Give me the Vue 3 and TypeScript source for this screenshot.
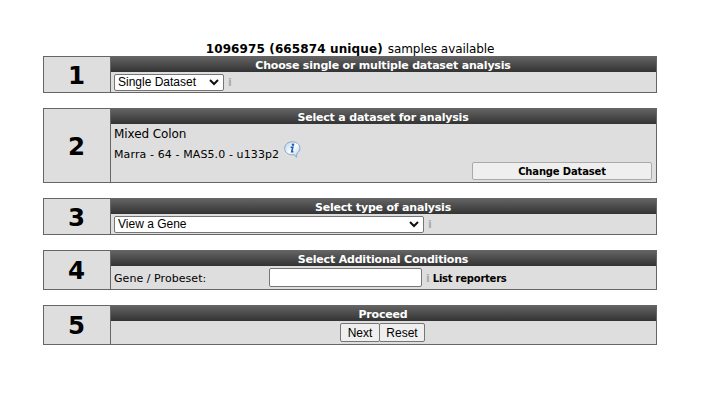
<script setup lang="ts">
import { ref } from 'vue'

const mode = ref('Single Dataset')
const analysis = ref('View a Gene')
const reporter = ref('')
</script>

<template>
  <main class="page">
    <p class="summary"><b>1096975 (665874 unique)</b><span>samples available</span></p>

    <section class="step step-short">
      <div class="number">1</div>
      <div class="content">
        <h2>Choose single or multiple dataset analysis</h2>
        <div class="row">
          <div class="select mode">
            <select v-model="mode"><option>Single Dataset</option></select>
            <svg class="chevron" viewBox="0 0 10 7"><path d="M1 1 L5 5 L9 1" /></svg>
          </div>
          <span class="hint">i</span>
        </div>
      </div>
    </section>

    <section class="step step-dataset">
      <div class="number">2</div>
      <div class="content">
        <h2>Select a dataset for analysis</h2>
        <div class="dataset">
          <div class="name">Mixed Colon</div>
          <div class="detail">
            <span>Marra - 64 - MAS5.0 - u133p2</span>
            <svg class="info" viewBox="0 0 17 17">
              <defs>
                <linearGradient id="bubble" x1="0" y1="0" x2="1" y2="1">
                  <stop offset="0" stop-color="#b4d2ee" />
                  <stop offset=".5" stop-color="#fafdff" />
                  <stop offset="1" stop-color="#a9caea" />
                </linearGradient>
              </defs>
              <path d="M8.3.8C4 .8.7 3.600.7 7.300c0 3.700 3.200 6.500 7.500 6.500.8 0 1.500 0 2.200-.2.400 1.300 1.200 2.100 2.300 2.600-.2-1.300-.1-2.600.3-3.900 1.800-1.200 2.900-2.900 2.900-5C15.900 3.600 12.600.8 8.300.8Z" fill="url(#bubble)" stroke="#839fbd" stroke-width=".9" />
              <circle cx="9" cy="3.700" r="1.200" fill="#1c5fae" />
              <path d="M6.600 6.200h2.200L7.700 10.600h1.700" fill="none" stroke="#1c5fae" stroke-width="1.600" />
            </svg>
          </div>
          <button class="change">Change Dataset</button>
        </div>
      </div>
    </section>

    <section class="step step-short">
      <div class="number">3</div>
      <div class="content">
        <h2>Select type of analysis</h2>
        <div class="row">
          <div class="select analysis">
            <select v-model="analysis"><option>View a Gene</option></select>
            <svg class="chevron" viewBox="0 0 10 7"><path d="M1 1 L5 5 L9 1" /></svg>
          </div>
          <span class="hint">i</span>
        </div>
      </div>
    </section>

    <section class="step">
      <div class="number">4</div>
      <div class="content">
        <h2>Select Additional Conditions</h2>
        <div class="row">
          <label for="reporter">Gene / Probeset:</label>
          <input id="reporter" v-model="reporter" type="text" />
          <span class="hint">i</span>
          <b class="list">List reporters</b>
        </div>
      </div>
    </section>

    <section class="step">
      <div class="number">5</div>
      <div class="content">
        <h2>Proceed</h2>
        <div class="row actions">
          <button class="next">Next</button>
          <button class="reset">Reset</button>
        </div>
      </div>
    </section>
  </main>
</template>

<style>
body {
  background: #fff;
}
</style>

<style scoped>
.page,
.page * {
  box-sizing: border-box;
}
.page {
  width: 720px;
  height: 416px;
  padding: 41px 63px 0 43px;
  display: flex;
  flex-direction: column;
  font-family: Verdana, "DejaVu Sans", sans-serif;
  color: #000;
}
.summary {
  display: flex;
  justify-content: center;
  gap: 5px;
  height: 15px;
  margin: 0;
  font-size: 12px;
  line-height: 16px;
  white-space: nowrap;
}
.summary b {
  letter-spacing: .12px;
}
.summary span {
  letter-spacing: -.08px;
}
.step {
  display: flex;
  height: 40px;
  margin-bottom: 15px;
  flex: none;
  background: #dedede;
  border: 1px solid #666;
  border-top: 0;
}
.step-short {
  height: 37px;
}
.step-dataset {
  height: 75px;
}
.number {
  width: 67px;
  padding-top: 2px;
  padding-right: 1px;
  border-top: 1px solid #666;
  border-right: 1px solid #666;
  display: flex;
  align-items: center;
  justify-content: center;
  font-size: 24.5px;
  font-weight: bold;
  line-height: 28px;
}
.content {
  flex: 1;
  display: flex;
  flex-direction: column;
}
h2 {
  margin: 0;
  height: 16px;
  flex: none;
  padding-right: 1px;
  background: linear-gradient(#666, #333);
  color: #fff;
  font-size: 11px;
  line-height: 19px;
  letter-spacing: -.19px;
  text-align: center;
  white-space: nowrap;
}
.row {
  display: flex;
  align-items: center;
  flex: 1;
  padding-left: 3px;
  font-size: 11px;
}
.select {
  position: relative;
  height: 17px;
}
.mode {
  width: 110px;
}
.analysis {
  width: 310px;
}
select {
  display: block;
  width: 100%;
  height: 100%;
  appearance: none;
  margin: 0;
  padding: 0 3px;
  border: 1px solid #767676;
  border-radius: 2px;
  background: #fff;
  color: #000;
  font: 12px/15px "Liberation Sans", Arial, sans-serif;
}
.chevron {
  position: absolute;
  right: 5px;
  top: 5px;
  width: 10px;
  height: 7px;
  fill: none;
  stroke: #111;
  stroke-width: 2;
}
.hint {
  margin-left: 4px;
  padding-top: 1px;
  color: #aaa;
  font-size: 11px;
  font-weight: bold;
}
.dataset {
  flex: 1;
  display: flex;
  flex-direction: column;
  padding: 3px 4px 0 3px;
}
.name {
  height: 14px;
  font-size: 12px;
  line-height: 14px;
  letter-spacing: -.08px;
}
.detail {
  display: flex;
  height: 21px;
  font-size: 11px;
  line-height: 27px;
  letter-spacing: .11px;
}
.info {
  width: 17px;
  height: 17px;
  margin-left: 5px;
}
button {
  border: 1px solid #767676;
  border-radius: 2px;
  background: #efefef;
  color: #000;
  padding: 1px 0 0;
  height: 19px;
  font: 12px/16px "Liberation Sans", Arial, sans-serif;
}
.change {
  width: 180px;
  height: 18px;
  align-self: flex-end;
  border-color: #aaa;
  font: bold 10px/15px Verdana, "DejaVu Sans", sans-serif;
  letter-spacing: -.16px;
}
label {
  width: 155px;
  padding-top: 2px;
  letter-spacing: .05px;
}
input {
  width: 153px;
  height: 19px;
  border: 1px solid #767676;
  border-radius: 2px;
  background: #fff;
  padding: 1px 2px;
}
.list {
  padding-top: 2px;
  font-size: 10px;
  margin-left: 3px;
  letter-spacing: -.24px;
}
.actions {
  justify-content: center;
  padding: 0 2px 0 0;
}
.next {
  width: 40px;
}
.reset {
  width: 46px;
  margin-left: -1px;
}
</style>
